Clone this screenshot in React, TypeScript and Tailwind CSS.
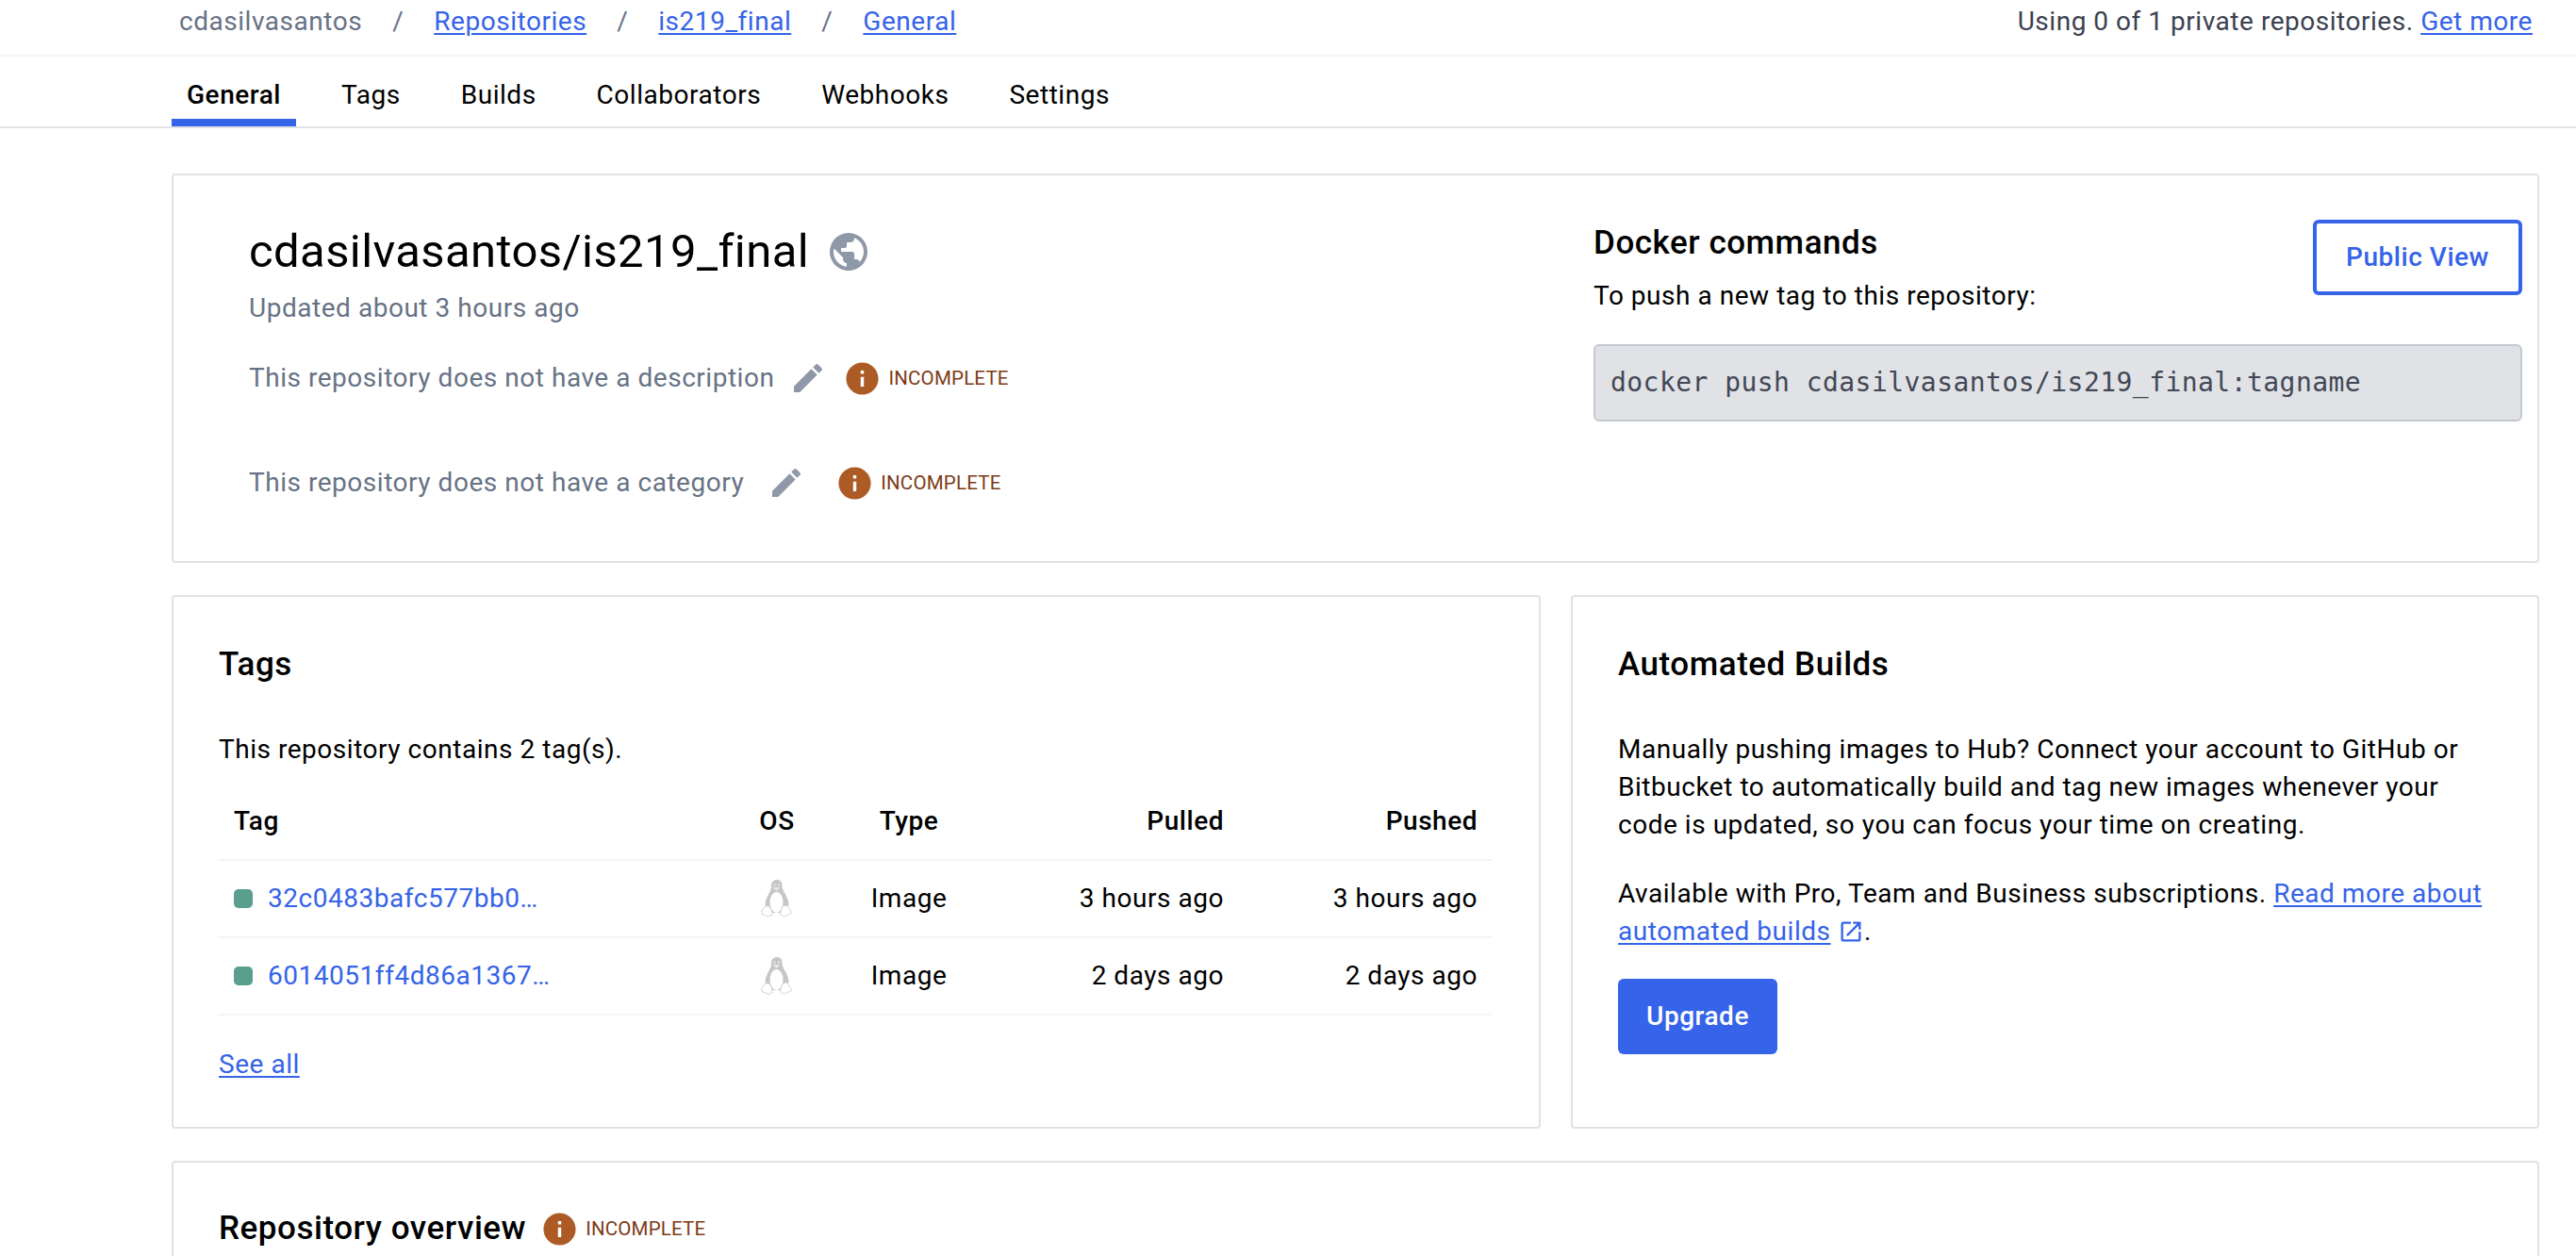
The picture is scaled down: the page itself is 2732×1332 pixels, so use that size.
import React from "react";

const globePath =
  "M12 2C6.48 2 2 6.48 2 12s4.48 10 10 10 10-4.48 10-10S17.52 2 12 2zm-1 17.93c-3.95-.49-7-3.85-7-7.93 0-.62.08-1.21.21-1.79L9 15v1c0 1.1.9 2 2 2v1.93zm6.9-2.54c-.26-.81-1-1.39-1.9-1.39h-1v-3c0-.55-.45-1-1-1H8v-2h2c.55 0 1-.45 1-1V7h2c1.1 0 2-.9 2-2v-.41c2.93 1.19 5 4.06 5 7.41 0 2.08-.8 3.97-2.1 5.39z";
const pencilPath =
  "M3 17.25V21h3.75L17.81 9.94l-3.75-3.75L3 17.25zM20.71 7.04c.39-.39.39-1.02 0-1.41l-2.34-2.34a.9959.9959 0 0 0-1.41 0l-1.83 1.83 3.75 3.75 1.83-1.83z";
const infoPath =
  "M12 2C6.48 2 2 6.48 2 12s4.48 10 10 10 10-4.48 10-10S17.52 2 12 2zm1 15h-2v-6h2v6zm0-8h-2V7h2v2z";
const externalPath =
  "M19 19H5V5h7V3H5c-1.11 0-2 .9-2 2v14c0 1.1.89 2 2 2h14c1.1 0 2-.9 2-2v-7h-2v7zM14 3v2h3.59l-9.83 9.83 1.41 1.41L19 6.41V10h2V3h-7z";

const Icon = ({ d, className }: { d: string; className: string }) => (
  <svg viewBox="0 0 24 24" fill="currentColor" className={className}>
    <path d={d} />
  </svg>
);

const Penguin = () => (
  <svg viewBox="0 0 34 40" className="h-[40px] w-[34px]">
    {/* body */}
    <path
      d="M17 0c-4 0-6 2.500-6 6.500 0 3-.5 4.500-2.500 8C6.500 18 4.500 22 4.500 27l6 8h12l7-8c0-5-2-9-4-12.500-2-3.500-3-5-3-8C22.500 2.500 21 0 17 0z"
      fill="#c6c6c6"
    />
    {/* belly */}
    <ellipse cx="16.500" cy="24" rx="7" ry="11" fill="#ffffff" />
    <path d="M12.500 8h8l-4 4z" fill="#e9e9e9" />
    <circle cx="14.500" cy="5.500" r="1.100" fill="#f2f2f2" />
    <circle cx="19" cy="5.500" r="1.100" fill="#f2f2f2" />
    {/* feet */}
    <path
      d="M4.500 28L.7 33l.5 3.500 7 2.800 4-2-1-5-2.500-4.300z"
      fill="#ffffff"
      stroke="#d6d6d6"
      strokeWidth="1"
    />
    <path
      d="M27.500 27l-4.500 1-1.500 4-1 5 4 2.200 8-3.700L32 33.500z"
      fill="#ffffff"
      stroke="#d6d6d6"
      strokeWidth="1"
    />
  </svg>
);

const Incomplete = () => (
  <span className="flex items-center gap-[11px]">
    <span className="flex h-[34px] w-[34px] items-center justify-center">
      <Icon d={infoPath} className="h-[41px] w-[41px] shrink-0 text-[#ac5b25]" />
    </span>
    <span className="text-[20.5px] font-normal leading-none tracking-[0.2px] text-[#7d3a16]">INCOMPLETE</span>
  </span>
);

const Link = ({ children, className = "" }: { children: React.ReactNode; className?: string }) => (
  <a className={"text-[#3563e9] underline decoration-2 underline-offset-[3px] " + className}>{children}</a>
);

const Slash = () => <span className="text-[#677285]">/</span>;

const tabs = ["General", "Tags", "Builds", "Collaborators", "Webhooks", "Settings"];

const tags = [
  { name: "32c0483bafc577bb0…", pulled: "3 hours ago", pushed: "3 hours ago" },
  { name: "6014051ff4d86a1367…", pulled: "2 days ago", pushed: "2 days ago" },
];

const gridCols = "grid grid-cols-[548px_88px_192px_254px_268px] items-center";

const App = () => {
  return (
    <div className="h-[1332px] overflow-hidden bg-white font-['Roboto',sans-serif] text-[28px] tracking-[0.53px] text-black">
      {/* Breadcrumb */}
      <div className="flex h-[60px] items-start justify-between border-b-2 border-[#f4f4f6] pl-[190px] pr-[46px]">
        <div className="flex gap-[32px] leading-[46px]">
          <span className="text-[#677285]">cdasilvasantos</span>
          <Slash />
          <Link>Repositories</Link>
          <Slash />
          <Link>is219_final</Link>
          <Slash />
          <Link>General</Link>
        </div>
        <div className="leading-[46px] text-[#3b4150]">
          Using 0 of 1 private repositories. <Link>Get more</Link>
        </div>
      </div>

      {/* Tabs */}
      <div className="flex h-[76px] gap-[32px] border-b-2 border-[#e1e2e6] pl-[182px]">
        {tabs.map((tab, i) => (
          <div
            key={tab}
            className={
              "flex h-[74px] items-center px-[16px] " +
              (i === 0 ? "border-b-8 border-[#3563e9] pt-[16px] font-medium" : "pt-[8px]")
            }
          >
            {tab}
          </div>
        ))}
      </div>

      <div className="flex flex-col gap-[34px] pl-[182px] pr-[39px] pt-[48px]">
        {/* Repo header */}
        <div className="flex h-[413px] justify-between rounded border-2 border-[#e1e2e6] pl-[80px] pr-[16px]">
          <div>
            <div className="mt-[52px] flex items-center gap-[18px]">
              <h1 className="text-[49px] font-normal leading-[58px] tracking-[0.4px]">cdasilvasantos/is219_final</h1>
              <Icon d={globePath} className="h-[48px] w-[48px] text-[#8f98a8]" />
            </div>
            <p className="mt-[13px] leading-[36px] text-[#677285]">Updated about 3 hours ago</p>
            <div className="mt-[36px] flex h-[40px] items-center text-[#677285]">
              This repository does not have a description
              <Icon d={pencilPath} className="ml-[16px] h-[40px] w-[40px] text-[#8f98a8]" />
              <span className="ml-[20px]">
                <Incomplete />
              </span>
            </div>
            <div className="mt-[71px] flex h-[40px] items-center text-[#677285]">
              This repository does not have a category
              <Icon d={pencilPath} className="ml-[25px] h-[40px] w-[40px] text-[#8f98a8]" />
              <span className="ml-[35px]">
                <Incomplete />
              </span>
            </div>
          </div>
          <div className="w-[985px] pt-[47px]">
            <div className="flex items-start justify-between">
              <div>
                <h2 className="mt-[2px] text-[35px] font-medium leading-[46px]">Docker commands</h2>
                <p className="mt-[13px] leading-[40px]">To push a new tag to this repository:</p>
              </div>
              <button className="h-[80px] w-[222px] rounded-[6px] border-4 border-[#3563e9] font-medium text-[#3563e9]">
                Public View
              </button>
            </div>
            <div className="mt-[31px] flex h-[82px] items-center rounded-[6px] border-2 border-[#c4c8d1] bg-[#e1e2e6] pl-[16px] font-['DejaVu_Sans_Mono',monospace] text-[28px] tracking-[0.45px] text-[#414855]">
              docker push cdasilvasantos/is219_final:tagname
            </div>
          </div>
        </div>

        <div className="flex h-[566px] gap-[32px]">
          {/* Tags */}
          <div className="w-[1452px] rounded border-2 border-[#e1e2e6] pl-[48px] pr-[50px]">
            <h2 className="mt-[49px] text-[35px] font-medium leading-[46px]">Tags</h2>
            <p className="mt-[47px] leading-[40px]">This repository contains 2 tag(s).</p>
            <div className={gridCols + " mt-[15px] h-[83px] border-b-2 border-[#f4f4f6] font-medium"}>
              <span className="pl-[16px]">Tag</span>
              <span className="text-center">OS</span>
              <span className="text-center">Type</span>
              <span className="pr-[16px] text-right">Pulled</span>
              <span className="pr-[15px] text-right">Pushed</span>
            </div>
            {tags.map((tag) => (
              <div key={tag.name} className={gridCols + " h-[82px] border-b-2 border-[#f4f4f6]"}>
                <span className="flex items-center gap-[16px] pl-[16px]">
                  <span className="h-[20px] w-[20px] rounded-[5px] bg-[#5a9e8e]" />
                  <span className="text-[#3563e9]">{tag.name}</span>
                </span>
                <span className="flex justify-center">
                  <Penguin />
                </span>
                <span className="text-center">Image</span>
                <span className="pr-[16px] text-right">{tag.pulled}</span>
                <span className="pr-[15px] text-right">{tag.pushed}</span>
              </div>
            ))}
            <div className="mt-[32px] leading-[40px]">
              <Link>See all</Link>
            </div>
          </div>

          {/* Automated builds */}
          <div className="flex-1 rounded border-2 border-[#e1e2e6] pl-[48px] pr-[50px]">
            <h2 className="mt-[49px] text-[35px] font-medium leading-[46px]">Automated Builds</h2>
            <p className="mt-[47px] leading-[40px]">
              Manually pushing images to Hub? Connect your account to GitHub or Bitbucket to automatically build and tag
              new images whenever your code is updated, so you can focus your time on creating.
            </p>
            <p className="mt-[33px] leading-[40px]">
              Available with Pro, Team and Business subscriptions. <Link>Read more about automated builds</Link>{" "}
              <Icon d={externalPath} className="inline h-[28px] w-[28px] align-[-5px] text-[#3563e9]" />.
            </p>
            <button className="mt-[30px] block h-[80px] w-[169px] rounded-[6px] bg-[#3563e9] font-medium text-white">
              Upgrade
            </button>
          </div>
        </div>

        {/* Overview */}
        <div className="h-[200px] rounded border-2 border-[#e1e2e6] pl-[48px]">
          <div className="mt-[47px] flex items-center gap-[18px]">
            <h2 className="text-[35px] font-medium leading-[46px]">Repository overview</h2>
            <Incomplete />
          </div>
        </div>
      </div>
    </div>
  );
};

export default App;
